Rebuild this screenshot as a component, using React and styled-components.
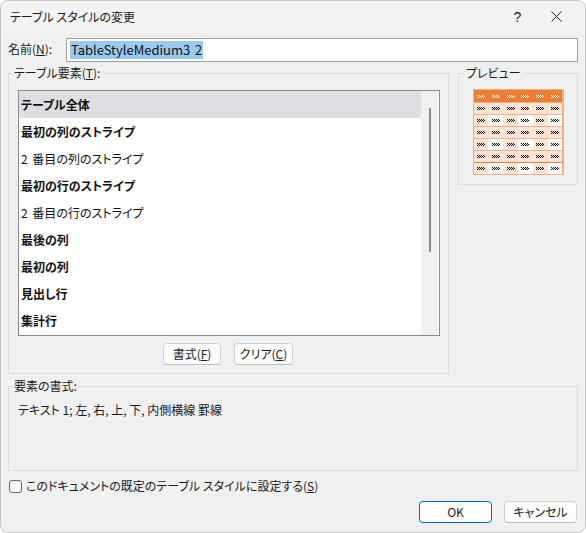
import React from "react";
import styled, { createGlobalStyle } from "styled-components";

const Global = createGlobalStyle`
  html, body { margin: 0; padding: 0; background: #ffffff; }
  body {
    font-family: "Noto Sans CJK JP", "Noto Sans", sans-serif;
    font-size: 12px;
    color: #1b1b1b;
  }
  * { box-sizing: border-box; }
`;

const Window = styled.div`
  width: 586px;
  height: 533px;
  background: #f0f0f0;
  border: 1px solid #c6c6c6;
  border-radius: 8px;
  overflow: hidden;
  display: flex;
  flex-direction: column;
  font-feature-settings: "palt";
`;

const TitleBar = styled.div`
  height: 31px;
  flex: none;
  background: #f3f3f3;
  display: flex;
  align-items: center;
  padding: 0 9px 0 9px;
`;

const Title = styled.div`
  flex: 1;
  font-size: 12px;
  line-height: 16px;
`;

const TitleButton = styled.div`
  width: 39px;
  height: 31px;
  display: flex;
  align-items: center;
  justify-content: center;
  font-size: 14px;
  font-family: "Liberation Sans", sans-serif;
  color: #1b1b1b;
`;

const Content = styled.div`
  flex: 1;
  display: flex;
  flex-direction: column;
  padding: 6px 7px 0 7px;
`;

const NameRow = styled.div`
  display: flex;
  align-items: center;
  height: 24px;
`;

const NameLabel = styled.label`
  width: 58px;
  line-height: 16px;
  padding-bottom: 2px;
`;

const TextInput = styled.div`
  flex: 1;
  height: 24px;
  background: #ffffff;
  border: 1px solid #a0a0a0;
  display: flex;
  align-items: center;
  padding-left: 3px;
  font-size: 13px;
  word-spacing: 2px;
`;

const Selected = styled.span`
  background: #99c9ef;
  color: #111;
  line-height: 18px;
  padding: 0 1px;
`;

const MainRow = styled.div`
  display: grid;
  grid-template-columns: 1fr 120px;
  column-gap: 9px;
  align-items: start;
  margin-top: 3px;
`;

const Group = styled.fieldset`
  margin: ${(p) => p.$mt || 0}px 0 0 0;
  padding: 0;
  border: 1px solid #dcdcdc;
  min-width: 0;
  ${(p) => (p.$height ? `height: ${p.$height}px;` : "")}
`;

const Legend = styled.legend`
  margin-left: ${(p) => p.$indent || 3}px;
  padding: 0 2px;
  line-height: 16px;
  font-size: 12px;
  color: #1b1b1b;
`;

const GroupBody = styled.div`
  padding: ${(p) => p.$pad};
  display: flex;
  flex-direction: column;
  align-items: ${(p) => p.$align || "stretch"};
`;

const ListBox = styled.div`
  height: 246px;
  background: #ffffff;
  border: 1px solid #858a90;
  display: flex;
`;

const ListItems = styled.div`
  flex: 1;
  display: flex;
  flex-direction: column;
`;

const ListItem = styled.div`
  height: 27px;
  line-height: 27px;
  padding-left: 2px;
  font-weight: ${(p) => (p.$bold ? 700 : 400)};
  background: ${(p) => (p.$selected ? "#dedee3" : "transparent")};
  color: #111;
  word-spacing: 2px;
`;

const ScrollTrack = styled.div`
  width: 17px;
  margin-right: 1px;
  background: #f0f0f0;
  display: flex;
  justify-content: center;
  padding-top: 17px;
`;

const ScrollThumb = styled.div`
  width: 2px;
  height: 144px;
  margin-left: 1px;
  background: #868686;
  border-radius: 1px;
`;

const ButtonRow = styled.div`
  display: flex;
  justify-content: center;
  gap: 13px;
  margin-top: 7px;
  padding-right: 2px;
`;

const Button = styled.button`
  height: 22px;
  width: ${(p) => p.$width}px;
  padding: 0;
  background: #fdfdfd;
  border: 1px solid ${(p) => (p.$primary ? "#0067c0" : "#d0d0d0")};
  border-bottom-color: ${(p) => (p.$primary ? "#0067c0" : "#bcbcbc")};
  border-radius: 4px;
  font-family: inherit;
  font-feature-settings: "palt";
  font-size: 12px;
  color: #1b1b1b;
  line-height: 18px;
`;

const Preview = styled.div`
  width: 91px;
  border: 1px solid #f4b084;
  display: flex;
  flex-direction: column;
  background: #f4b084;
  gap: 1px;
`;

const PreviewRow = styled.div`
  display: grid;
  grid-template-columns: repeat(6, 1fr);
  height: ${(p) => (p.$header ? 12 : 11)}px;
  ${(p) => (p.$total ? "box-shadow: 0 -1px 0 #ed7d31;" : "")}
`;

const PreviewCell = styled.div`
  display: flex;
  align-items: center;
  justify-content: center;
  background: ${(p) => p.$bg};
`;

const FormatText = styled.div`
  line-height: 16px;
`;

const CheckRow = styled.label`
  display: flex;
  align-items: center;
  gap: 4px;
  margin-top: 8px;
  height: 14px;
  line-height: 16px;
`;

const CheckBox = styled.span`
  width: 13px;
  height: 13px;
  border: 1px solid #666666;
  border-radius: 3px;
  background: #f9f9f9;
  margin-left: 1px;
`;

const Footer = styled.div`
  display: flex;
  justify-content: flex-end;
  gap: 12px;
  margin-top: 8px;
  padding-right: 1px;
`;

const MiniText = ({ color }) => (
  <svg width="8" height="3" viewBox="0 0 8 3" shapeRendering="crispEdges">
    {[0, 2, 4, 6].map((x) => (
      <rect key={"a" + x} x={x} y={0} width="1" height="1" fill={color} />
    ))}
    {[1, 3, 5, 7].map((x) => (
      <rect key={"b" + x} x={x} y={1} width="1" height="1" fill={color} />
    ))}
    {[0, 2, 4, 6].map((x) => (
      <rect key={"c" + x} x={x} y={2} width="1" height="1" fill={color} />
    ))}
  </svg>
);

const CloseIcon = () => (
  <svg width="11" height="11" viewBox="0 0 11 11">
    <path d="M0.5 0.5 L10.5 10.5 M10.5 0.5 L0.5 10.5" stroke="#1b1b1b" strokeWidth="1" fill="none" />
  </svg>
);

const items = [
  { t: "テーブル全体", b: true, s: true },
  { t: "最初の列のストライプ", b: true },
  { t: "2 番目の列のストライプ", b: false },
  { t: "最初の行のストライプ", b: true },
  { t: "2 番目の行のストライプ", b: false },
  { t: "最後の列", b: true },
  { t: "最初の列", b: true },
  { t: "見出し行", b: true },
  { t: "集計行", b: true },
];

const PEACH = "#fce4d6";
const ORANGE = "#ed7d31";

const previewRows = [
  { header: true },
  { alt: false },
  { alt: true },
  { alt: false },
  { alt: true },
  { alt: false },
  { alt: true, total: true },
];

export default function App() {
  return (
    <>
      <Global />
      <Window>
        <TitleBar>
          <Title>テーブル スタイルの変更</Title>
          <TitleButton>?</TitleButton>
          <TitleButton>
            <CloseIcon />
          </TitleButton>
        </TitleBar>
        <Content>
          <NameRow>
            <NameLabel>
              名前(<u>N</u>):
            </NameLabel>
            <TextInput>
              <Selected>TableStyleMedium3 2</Selected>
            </TextInput>
          </NameRow>

          <MainRow>
            <Group>
              <Legend>
                テーブル要素(<u>T</u>):
              </Legend>
              <GroupBody $pad="9px 8px 8px 9px">
                <ListBox>
                  <ListItems>
                    {items.map((it) => (
                      <ListItem key={it.t} $bold={it.b} $selected={it.s}>
                        {it.t}
                      </ListItem>
                    ))}
                  </ListItems>
                  <ScrollTrack>
                    <ScrollThumb />
                  </ScrollTrack>
                </ListBox>
                <ButtonRow>
                  <Button $width={58}>
                    書式(<u>F</u>)
                  </Button>
                  <Button $width={59}>
                    クリア(<u>C</u>)
                  </Button>
                </ButtonRow>
              </GroupBody>
            </Group>

            <Group>
              <Legend $indent={5}>プレビュー</Legend>
              <GroupBody $pad="8px 0 9px 0" $align="center">
                <Preview>
                  {previewRows.map((r, ri) => (
                    <PreviewRow key={ri} $header={r.header} $total={r.total}>
                      {Array.from({ length: 6 }).map((_, ci) => (
                        <PreviewCell
                          key={ci}
                          $bg={
                            r.header
                              ? ORANGE
                              : r.alt && ci % 2 === 1
                              ? "#ffffff"
                              : PEACH
                          }
                        >
                          <MiniText color={r.header ? "#ffffff" : "#000000"} />
                        </PreviewCell>
                      ))}
                    </PreviewRow>
                  ))}
                </Preview>
              </GroupBody>
            </Group>
          </MainRow>

          <Group $height={93} $mt={4}>
            <Legend>要素の書式:</Legend>
            <GroupBody $pad="8px 9px">
              <FormatText>テキスト 1; 左, 右, 上, 下, 内側横線 罫線</FormatText>
            </GroupBody>
          </Group>

          <CheckRow>
            <CheckBox />
            <span>
              このドキュメントの既定のテーブル スタイルに設定する(<u>S</u>)
            </span>
          </CheckRow>

          <Footer>
            <Button $width={73} $primary>
              OK
            </Button>
            <Button $width={73}>キャンセル</Button>
          </Footer>
        </Content>
      </Window>
    </>
  );
}
